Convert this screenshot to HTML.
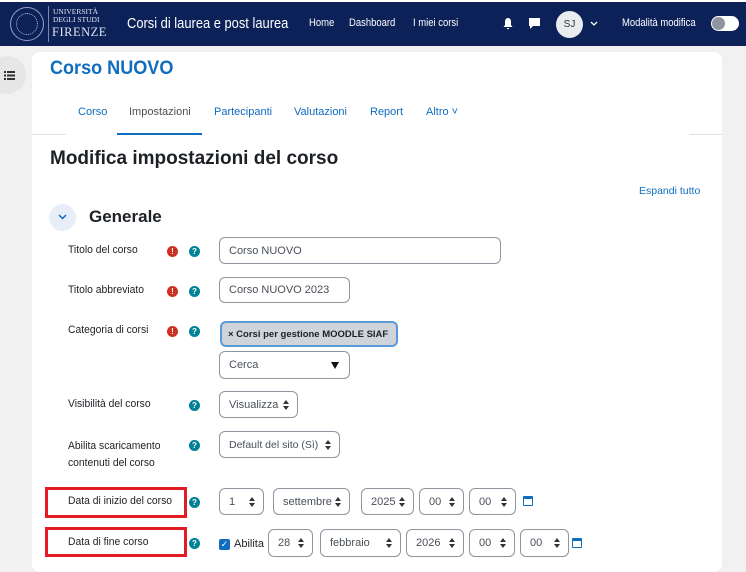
<!DOCTYPE html>
<html><head><meta charset="utf-8"><style>
*{box-sizing:border-box;margin:0;padding:0}
body{width:746px;height:562px;overflow:hidden;background:#f1f1f1;font-family:"Liberation Sans",sans-serif;position:relative;color:#1d2125}
.a{position:absolute;white-space:nowrap}
.sx{transform:scaleX(.86);transform-origin:left center}
.nav{left:0;top:2px;width:746px;height:44px;background:#0d2159;border-top:0}
.nl{color:#fff;font-size:11px;top:17px}
.card{left:32px;top:52px;width:690px;height:520px;background:#fff;border-radius:8px}
.tab{top:106px;font-size:11px;color:#0f6cbf}
.lbl{left:68px;font-size:11px;color:#1d2125;transform:scaleX(.94);transform-origin:left center}
.ex{width:11px;height:11px;border-radius:50%;background:#ca3120;color:#fff;font-size:8px;font-weight:bold;text-align:center;line-height:11px}
.q{width:11px;height:11px;border-radius:50%;background:#008196;color:#fff;font-size:8px;font-weight:bold;text-align:center;line-height:11px}
.in{border:1px solid #8f959e;border-radius:6px;font-size:11px;color:#495057;padding-left:9px;display:flex;align-items:center;background:#fff}
.sel::after{content:"";position:absolute;right:8px;top:50%;margin-top:-5px;width:0;height:0;border-left:3px solid transparent;border-right:3px solid transparent;border-bottom:4px solid #333}
.sel::before{content:"";position:absolute;right:8px;top:50%;margin-top:1px;width:0;height:0;border-left:3px solid transparent;border-right:3px solid transparent;border-top:4px solid #333}
.red{border:3px solid #e31b23}
.cal{width:10px;height:10px;border:1.5px solid #0f6cbf;border-top-width:3px;border-radius:1px}
</style></head><body>
<div class="a" style="left:0;top:0;width:746px;height:2px;background:#fff"></div>
<div class="a nav"></div>
<div class="a" style="left:10px;top:7px;width:34px;height:34px;border-radius:50%;border:1.5px solid #b9c0d4;opacity:.8"></div>
<div class="a" style="left:16px;top:13px;width:22px;height:22px;border-radius:50%;border:1px dotted #b9c0d4"></div>
<div class="a" style="left:48px;top:6px;width:1px;height:36px;background:#7d88a8"></div>
<div class="a" style="left:53px;top:8px;color:#dfe3ee;font-family:'Liberation Serif',serif;font-size:7.5px;line-height:8px">UNIVERSITÀ<br>DEGLI STUDI</div>
<div class="a" style="left:52px;top:25px;color:#dfe3ee;font-family:'Liberation Serif',serif;font-size:12.5px;letter-spacing:.5px">FIRENZE</div>
<div class="a sx" style="left:127px;top:15px;color:#fff;font-size:15px">Corsi di laurea e post laurea</div>
<div class="a nl sx" style="left:309px">Home</div>
<div class="a nl sx" style="left:349px">Dashboard</div>
<div class="a nl sx" style="left:413px">I miei corsi</div>
<svg class="a" style="left:502px;top:17px" width="12" height="13" viewBox="0 0 12 13"><path d="M6 1C3.8 1 3 3 3 5v3L1.5 10h9L9 8V5C9 3 8.2 1 6 1z M4.8 11h2.4a1.2 1.2 0 0 1-2.4 0z" fill="#fff"/></svg>
<svg class="a" style="left:528px;top:17px" width="13" height="13" viewBox="0 0 13 13"><path d="M1 1h11v8H5l-3 3V9H1z" fill="#fff"/></svg>
<div class="a" style="left:556px;top:11px;width:27px;height:27px;border-radius:50%;background:#e9ecef;color:#333;font-size:10px;text-align:center;line-height:27px">SJ</div>
<svg class="a" style="left:590px;top:21px" width="8" height="6" viewBox="0 0 8 6"><path d="M1 1l3 3 3-3" stroke="#fff" stroke-width="1.3" fill="none"/></svg>
<div class="a nl sx" style="left:622px">Modalità modifica</div>
<div class="a" style="left:711px;top:16px;width:28px;height:15px;border-radius:8px;background:#fff"></div>
<div class="a" style="left:712px;top:17px;width:13px;height:13px;border-radius:50%;background:#8f959e"></div>

<div class="a" style="left:-12px;top:56px;width:38px;height:38px;border-radius:50%;background:#e6e6e6"></div>
<svg class="a" style="left:4px;top:71px" width="11" height="9" viewBox="0 0 11 9"><g fill="#333"><rect x="0" y="0" width="2" height="2"/><rect x="3" y="0" width="8" height="2"/><rect x="0" y="3.5" width="2" height="2"/><rect x="3" y="3.5" width="8" height="2"/><rect x="0" y="7" width="2" height="2"/><rect x="3" y="7" width="8" height="2"/></g></svg>

<div class="a card"></div>
<div class="a" style="left:50px;top:58px;font-size:19px;font-weight:bold;color:#0f6cbf;transform:scaleX(.95);transform-origin:left">Corso NUOVO</div>
<div class="a tab" style="left:78px">Corso</div>
<div class="a tab" style="left:129px;color:#495057">Impostazioni</div>
<div class="a tab" style="left:214px">Partecipanti</div>
<div class="a tab" style="left:294px">Valutazioni</div>
<div class="a tab" style="left:370px">Report</div>
<div class="a tab" style="left:426px">Altro ˅</div>
<div class="a" style="left:32px;top:134px;width:34px;height:1px;background:#dee2e6"></div>
<div class="a" style="left:689px;top:134px;width:33px;height:1px;background:#dee2e6"></div>
<div class="a" style="left:117px;top:133px;width:85px;height:2px;background:#0f6cbf"></div>

<div class="a" style="left:50px;top:148px;font-size:19px;font-weight:bold">Modifica impostazioni del corso</div>
<div class="a" style="left:639px;top:185px;font-size:10.5px;color:#0f6cbf">Espandi tutto</div>
<div class="a" style="left:49px;top:204px;width:27px;height:27px;border-radius:50%;background:#e7eef8"></div>
<svg class="a" style="left:58px;top:214px" width="9" height="6" viewBox="0 0 9 6"><path d="M1 1l3.5 3.5L8 1" stroke="#0f6cbf" stroke-width="1.5" fill="none"/></svg>
<div class="a" style="left:89px;top:207px;font-size:17px;font-weight:bold">Generale</div>

<div class="a lbl" style="top:244px">Titolo del corso</div>
<div class="a ex" style="left:167px;top:246px">!</div><div class="a q" style="left:189px;top:246px">?</div>
<div class="a in" style="left:219px;top:237px;width:282px;height:27px">Corso NUOVO</div>

<div class="a lbl" style="top:284px">Titolo abbreviato</div>
<div class="a ex" style="left:167px;top:286px">!</div><div class="a q" style="left:189px;top:286px">?</div>
<div class="a in" style="left:219px;top:277px;width:131px;height:26px">Corso NUOVO 2023</div>

<div class="a lbl" style="top:324px">Categoria di corsi</div>
<div class="a ex" style="left:167px;top:326px">!</div><div class="a q" style="left:189px;top:326px">?</div>
<div class="a" style="left:220px;top:321px;width:178px;height:26px;border:2px solid #5b9bd5;border-radius:6px;background:#ced4da;font-size:9.5px;font-weight:bold;color:#1d2125;padding:6px 0 0 6px">× Corsi per gestione MOODLE SIAF</div>
<div class="a in" style="left:219px;top:351px;width:131px;height:28px">Cerca</div>
<div class="a" style="left:331px;top:362px;width:0;height:0;border-left:4px solid transparent;border-right:4px solid transparent;border-top:7px solid #111"></div>

<div class="a lbl" style="top:398px">Visibilità del corso</div>
<div class="a q" style="left:189px;top:400px">?</div>
<div class="a in sel" style="left:219px;top:391px;width:79px;height:27px">Visualizza</div>

<div class="a lbl" style="top:438px;line-height:17px">Abilita scaricamento<br>contenuti del corso</div>
<div class="a q" style="left:189px;top:440px">?</div>
<div class="a in sel" style="left:219px;top:431px;width:121px;height:27px;font-size:10.5px">Default del sito (Sì)</div>

<div class="a red" style="left:45px;top:487px;width:142px;height:31px"></div>
<div class="a lbl" style="top:495px">Data di inizio del corso</div>
<div class="a q" style="left:189px;top:497px">?</div>
<div class="a in sel" style="left:219px;top:488px;width:45px;height:27px">1</div>
<div class="a in sel" style="left:273px;top:488px;width:77px;height:27px">settembre</div>
<div class="a in sel" style="left:361px;top:488px;width:53px;height:27px">2025</div>
<div class="a in sel" style="left:419px;top:488px;width:45px;height:27px">00</div>
<div class="a in sel" style="left:469px;top:488px;width:47px;height:27px">00</div>
<div class="a cal" style="left:523px;top:496px"></div>

<div class="a red" style="left:45px;top:527px;width:142px;height:30px"></div>
<div class="a lbl" style="top:536px">Data di fine corso</div>
<div class="a q" style="left:189px;top:538px">?</div>
<div class="a" style="left:219px;top:539px;width:11px;height:11px;background:#0f6cbf;border-radius:2px;color:#fff;font-size:9px;line-height:11px;text-align:center">✓</div>
<div class="a" style="left:234px;top:538px;font-size:11px">Abilita</div>
<div class="a in sel" style="left:268px;top:529px;width:45px;height:28px">28</div>
<div class="a in sel" style="left:320px;top:529px;width:81px;height:28px">febbraio</div>
<div class="a in sel" style="left:406px;top:529px;width:58px;height:28px">2026</div>
<div class="a in sel" style="left:469px;top:529px;width:46px;height:28px">00</div>
<div class="a in sel" style="left:520px;top:529px;width:49px;height:28px">00</div>
<div class="a cal" style="left:572px;top:538px"></div>
</body></html>
